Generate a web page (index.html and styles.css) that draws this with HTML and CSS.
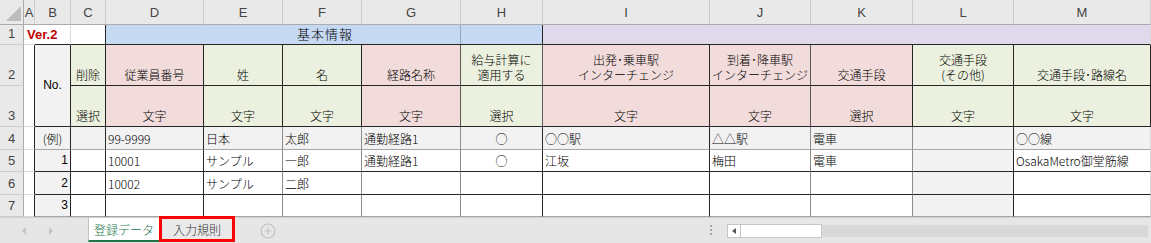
FILE: index.html
```html
<!DOCTYPE html>
<html lang="ja">
<head>
  <meta charset="UTF-8" />
  <meta name="viewport" content="width=device-width, initial-scale=1.0" />
  <title>登録データ</title>
  <link rel="stylesheet" href="styles.css">
</head>
<body>
  <div class="sheet">
    <!-- column headers -->
    <div class="row">
      <div class="corner"><svg width="24" height="25" viewBox="0 0 24 25"><polygon points="6,21 21,21 21,6" fill="#bdbdbd"/></svg></div>
      <div class="ch">A</div>
      <div class="ch">B</div>
      <div class="ch">C</div>
      <div class="ch">D</div>
      <div class="ch">E</div>
      <div class="ch">F</div>
      <div class="ch">G</div>
      <div class="ch">H</div>
      <div class="ch">I</div>
      <div class="ch">J</div>
      <div class="ch">K</div>
      <div class="ch">L</div>
      <div class="ch">M</div>
    </div>

    <!-- row 1 -->
    <div class="row">
      <div class="rh">1</div>
      <div class="c ver">Ver.2</div>
      <div class="c bot-dark"></div>
      <div class="c bot-dark vd"></div>
      <div class="c blue bot-dark vd span5">基本情報</div>
      <div class="c purple bot-dark span5"></div>
    </div>

    <!-- rows 2 and 3: column titles -->
    <div class="row">
      <div class="rh tall">2</div>
      <div class="c col-a vd"></div>
      <div class="c hc gray col-b">No.</div>
      <div class="c hc gn">削除</div>
      <div class="c hc pk">従業員番号</div>
      <div class="c hc gn">姓</div>
      <div class="c hc gn">名</div>
      <div class="c hc pk soft">経路名称</div>
      <div class="c hc gn soft">給与計算に<br>適用する</div>
      <div class="c hc pk">出発･乗車駅<br>インターチェンジ</div>
      <div class="c hc pk soft">到着･降車駅<br>インターチェンジ</div>
      <div class="c hc pk">交通手段</div>
      <div class="c hc gn">交通手段<br>(その他)</div>
      <div class="c hc gn">交通手段･路線名</div>
    </div>
    <div class="row">
      <div class="rh tall">3</div>
      <div class="c hc gn">選択</div>
      <div class="c hc pk">文字</div>
      <div class="c hc gn">文字</div>
      <div class="c hc gn">文字</div>
      <div class="c hc pk soft">文字</div>
      <div class="c hc gn soft">選択</div>
      <div class="c hc pk">文字</div>
      <div class="c hc pk soft">文字</div>
      <div class="c hc pk">選択</div>
      <div class="c hc gn">文字</div>
      <div class="c hc gn">文字</div>
    </div>

    <!-- data -->
    <div class="row data example">
      <div class="rh">4</div>
      <div class="c vd blank"></div>
      <div class="c vd mid">(例)</div>
      <div class="c vd"></div>
      <div class="c vd">99-9999</div>
      <div class="c vg">日本</div>
      <div class="c vg">太郎</div>
      <div class="c vg">通勤経路1</div>
      <div class="c vd mid">○</div>
      <div class="c vd">○○駅</div>
      <div class="c vg">△△駅</div>
      <div class="c vg">電車</div>
      <div class="c vd"></div>
      <div class="c">○○線</div>
    </div>
    <div class="row data strong">
      <div class="rh">5</div>
      <div class="c vd blank"></div>
      <div class="c vd num gray">1</div>
      <div class="c vd"></div>
      <div class="c vd">10001</div>
      <div class="c vg">サンプル</div>
      <div class="c vg">一郎</div>
      <div class="c vg">通勤経路1</div>
      <div class="c vd mid">○</div>
      <div class="c vd">江坂</div>
      <div class="c vg">梅田</div>
      <div class="c vg">電車</div>
      <div class="c vd gray"></div>
      <div class="c">OsakaMetro御堂筋線</div>
    </div>
    <div class="row data strong">
      <div class="rh">6</div>
      <div class="c vd blank"></div>
      <div class="c vd num gray">2</div>
      <div class="c vd"></div>
      <div class="c vd">10002</div>
      <div class="c vg">サンプル</div>
      <div class="c vg">二郎</div>
      <div class="c vg"></div>
      <div class="c vd"></div>
      <div class="c vd"></div>
      <div class="c vg"></div>
      <div class="c vg"></div>
      <div class="c vd gray"></div>
      <div class="c"></div>
    </div>
    <div class="row data">
      <div class="rh">7</div>
      <div class="c vd blank"></div>
      <div class="c vd num gray">3</div>
      <div class="c vd"></div>
      <div class="c vd"></div>
      <div class="c vg"></div>
      <div class="c vg"></div>
      <div class="c vg"></div>
      <div class="c vd"></div>
      <div class="c vd"></div>
      <div class="c vg"></div>
      <div class="c vg"></div>
      <div class="c vd gray"></div>
      <div class="c"></div>
    </div>
  </div>

  <div class="tabbar">
    <div class="nav">
      <svg width="5" height="8" viewBox="0 0 5 8"><polygon points="4,0 4,8 0,4" fill="#c4c4c4"/></svg>
      <svg width="5" height="8" viewBox="0 0 5 8"><polygon points="1,0 1,8 5,4" fill="#c4c4c4"/></svg>
    </div>
    <div class="tab active">登録データ</div>
    <div class="tab marked">入力規則</div>
    <div class="add">
      <svg width="16" height="16" viewBox="0 0 16 16">
        <circle cx="8" cy="8" r="7" fill="none" stroke="#c2c2c2" stroke-width="1.2"/>
        <path d="M8 4.5v7M4.5 8h7" stroke="#c2c2c2" stroke-width="1.2"/>
      </svg>
    </div>
    <div class="grip"><span></span><span></span><span></span></div>
    <div class="hscroll">
      <div class="thumb">
        <div class="btn"><svg width="4" height="6" viewBox="0 0 4 6"><polygon points="4,0 4,6 0,3" fill="#555"/></svg></div>
      </div>
      <div class="track"></div>
    </div>
  </div>
</body>
</html>
```

FILE: styles.css
```css
* {
  box-sizing: border-box;
}
body {
  margin: 0;
  background-color: #fff;
  font-family: "Noto Sans CJK JP", sans-serif;
  font-size: 12px;
  color: #000;
}
.sheet {
  display: grid;
  grid-template-columns: 24px 11px 36px 35px 98px 79px 79px 99px 82px 167px 101px 102px 101px 137px;
  grid-template-rows: 25px 20px 41px 41px 23px 22px 23px 22px;
}
.row {
  display: contents;
}
.corner {
  background-color: #e9e9e9;
  border-right: 1px solid #ababab;
  border-bottom: 1px solid #ababab;
}
.corner svg {
  display: block;
}
.ch {
  background-color: #e9e9e9;
  border-right: 1px solid #cdcdcd;
  border-bottom: 1px solid #ababab;
  font-family: "Liberation Sans", sans-serif;
  font-size: 13px;
  color: #444;
  display: flex;
  align-items: center;
  justify-content: center;
}
.rh {
  background-color: #e9e9e9;
  border-right: 1px solid #ababab;
  border-bottom: 1px solid #cdcdcd;
  font-family: "Liberation Sans", sans-serif;
  font-size: 13px;
  color: #444;
  display: flex;
  align-items: flex-end;
  justify-content: center;
  padding-bottom: 3px;
}
.c {
  border-right: 1px solid #dadada;
  border-bottom: 1px solid #dadada;
  display: flex;
  flex-direction: column;
  justify-content: flex-end;
  padding: 0 2px 3px;
  line-height: 15px;
  font-weight: 300;
  white-space: nowrap;
  overflow: hidden;
}

/* row 1 */
.ver {
  overflow: visible;
  border-right-color: transparent;
  color: #c00000;
  font-family: "Liberation Sans", sans-serif;
  font-weight: bold;
  font-size: 13px;
  padding-left: 3px;
  padding-bottom: 2px;
}
.bot-dark {
  border-bottom-color: #262626;
}
.span5 {
  grid-column: span 5;
}
.blue {
  background: linear-gradient(to right, transparent 354px, #93a6c2 354px, #93a6c2 355px, transparent 355px), #c6d9f3;
  text-align: center;
  font-size: 13px;
  letter-spacing: 1px;
  padding-right: 0;
}
.purple {
  background-color: #e0d9ec;
}

/* title rows */
.col-a {
  grid-row: span 2;
}
.col-b {
  grid-row: span 2;
  justify-content: center;
  padding-bottom: 0;
  font-family: "Liberation Sans", sans-serif;
  font-weight: normal;
  font-size: 12px;
}
.hc {
  border-right-color: #262626;
  border-bottom-color: #262626;
  text-align: center;
}
.hc.soft {
  border-right-color: #5a5a5a;
}
.pk {
  background-color: #f2dcdb;
}
.gn {
  background-color: #ebf1de;
}
.gray {
  background-color: #f2f2f2;
}

/* data rows */
.data .c {
  border-bottom-color: #a6a6a6;
}
.data.strong .c {
  border-bottom-color: #262626;
}
.data .c.blank {
  border-bottom-color: #dadada;
}
.example .c {
  background-color: #f2f2f2;
}
.example .c.blank {
  background-color: #fff;
}
.vd {
  border-right-color: #262626;
}
.vg {
  border-right-color: #8c8c8c;
}
.c.vd.blank {
  border-right-color: #262626;
}
.mid {
  text-align: center;
}
.num {
  text-align: right;
  font-family: "Liberation Sans", sans-serif;
  font-weight: normal;
}

/* sheet tabs */
.tabbar {
  display: flex;
  align-items: flex-start;
  height: 26px;
  background-color: #e6e6e6;
  border-top: 1px solid #d0d0d0;
}
.nav {
  width: 88px;
  height: 25px;
  display: flex;
  align-items: center;
  padding-left: 22px;
  gap: 21px;
}
.nav svg {
  display: block;
}
.tab {
  height: 24px;
  display: flex;
  align-items: center;
  justify-content: center;
  font-size: 12px;
  font-weight: 300;
}
.tab.active {
  width: 72px;
  background-color: #fff;
  border-left: 1px solid #c3c3c3;
  border-right: 1px solid #c3c3c3;
  border-bottom: 2px solid #217346;
  color: #217346;
}
.tab.marked {
  width: 76px;
  height: 26px;
  margin-left: -1px;
  margin-top: -2px;
  border: 3px solid #ff0000;
  background-color: #e9e9e9;
  color: #333;
}
.add {
  margin-left: 25px;
  margin-top: 5px;
}
.add svg {
  display: block;
}
.grip {
  margin-left: 434px;
  margin-top: 7px;
  width: 3px;
  display: flex;
  flex-direction: column;
  gap: 2px;
}
.grip span {
  width: 2px;
  height: 2px;
  background-color: #a8a8a8;
}
.hscroll {
  flex: 1;
  display: flex;
  align-items: center;
  margin-left: 14px;
  margin-right: 3px;
  margin-top: 6px;
}
.thumb {
  width: 95px;
  height: 14px;
  background-color: #fff;
  border: 1px solid #c6c6c6;
}
.btn {
  width: 13px;
  height: 12px;
  border-right: 1px solid #c6c6c6;
  display: flex;
  align-items: center;
  justify-content: center;
}
.btn svg {
  display: block;
}
.track {
  flex: 1;
  height: 12px;
  background-color: #d9d9d9;
}
```
